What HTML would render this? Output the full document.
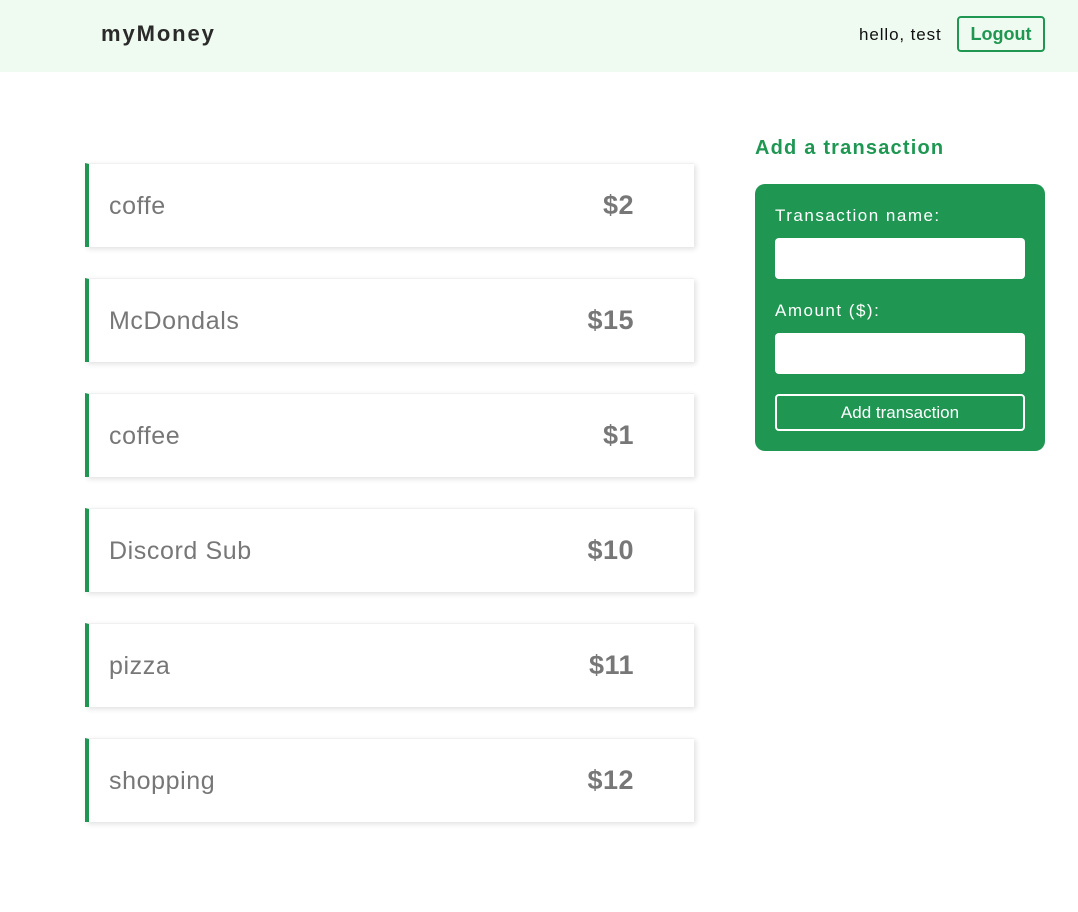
<!DOCTYPE html>
<html><head><style>
*{box-sizing:border-box;margin:0;padding:0}
body{width:1078px;height:912px;background:#fff;font-family:"Liberation Sans",sans-serif;position:relative;overflow:hidden}
.hdr{position:absolute;left:0;top:0;width:1078px;height:72px;background:#effaf0}
.logo{position:absolute;left:101px;top:21px;font-size:22px;font-weight:bold;color:#2a2a2a;letter-spacing:1.9px}
.hello{position:absolute;left:859px;top:25px;font-size:17px;color:#111;letter-spacing:0.9px}
.logout{position:absolute;left:957px;top:16px;width:88px;height:36px;border:2px solid #1f9752;border-radius:4px;color:#1f9752;font-weight:bold;font-size:18px;text-align:center;line-height:32px}
.card{position:absolute;left:85px;width:609px;height:84px;background:#fff;border-left:4px solid #1f9752;box-shadow:2px 2px 5px rgba(0,0,0,0.12);border-top:1px solid #f0f0f0}
.card .n{position:absolute;left:20px;top:28px;font-size:25px;color:#777;letter-spacing:0.6px}
.card .a{position:absolute;right:60px;top:26px;font-size:27px;font-weight:bold;color:#777;letter-spacing:0.5px}
.title{position:absolute;left:755px;top:137px;font-size:20px;font-weight:bold;color:#1f9752;letter-spacing:1.2px}
.box{position:absolute;left:755px;top:184px;width:290px;height:267px;background:#1f9752;border-radius:10px}
.lbl{position:absolute;left:775px;font-size:17px;color:#fff;letter-spacing:1.5px}
.inp{position:absolute;left:775px;width:250px;height:41px;background:#fff;border-radius:4px}
.btn{position:absolute;left:775px;top:394px;width:250px;height:37px;border:2px solid #fff;border-radius:4px;color:#fff;font-size:17px;text-align:center;line-height:33px}
</style></head><body>
<div class="hdr"></div>
<div class="logo">myMoney</div>
<div class="hello">hello, test</div>
<div class="logout">Logout</div>

<div class="card" style="top:163px"><span class="n">coffe</span><span class="a">$2</span></div>
<div class="card" style="top:278px"><span class="n">McDondals</span><span class="a">$15</span></div>
<div class="card" style="top:393px"><span class="n">coffee</span><span class="a">$1</span></div>
<div class="card" style="top:508px"><span class="n">Discord Sub</span><span class="a">$10</span></div>
<div class="card" style="top:623px"><span class="n">pizza</span><span class="a">$11</span></div>
<div class="card" style="top:738px"><span class="n">shopping</span><span class="a">$12</span></div>

<div class="title">Add a transaction</div>
<div class="box"></div>
<div class="lbl" style="top:206px">Transaction name:</div>
<div class="inp" style="top:238px"></div>
<div class="lbl" style="top:301px">Amount ($):</div>
<div class="inp" style="top:333px"></div>
<div class="btn">Add transaction</div>
</body></html>
